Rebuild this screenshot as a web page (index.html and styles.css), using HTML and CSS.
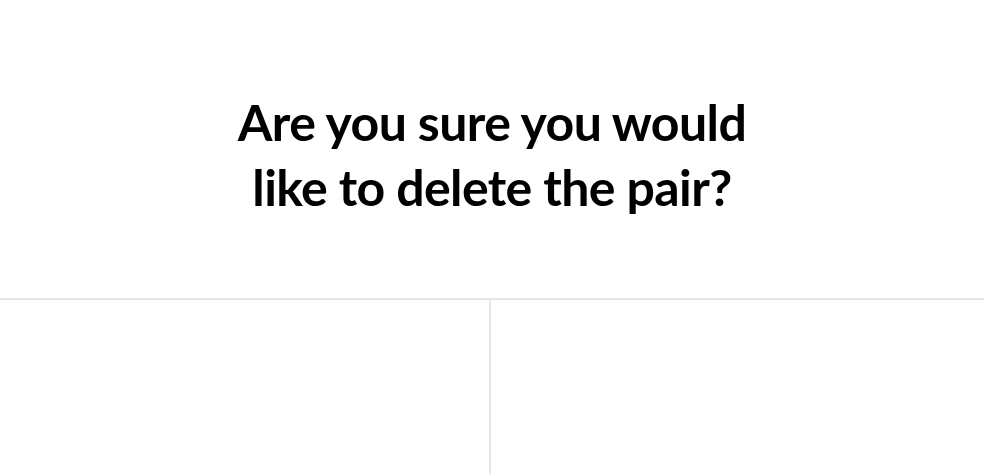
FILE: index.html
```html
<!DOCTYPE html>
<html>
<head>
<meta charset="utf-8">
<link rel="stylesheet" href="styles.css">
</head>
<body>
<div class="dialog">
  <div class="message">
    <h1 class="title">Are you sure you would<br>like to delete the pair?</h1>
  </div>
  <div class="actions">
    <button class="action action-left" type="button"></button>
    <button class="action" type="button"></button>
  </div>
</div>
</body>
</html>
```
FILE: styles.css
```css
html, body {
  margin: 0;
  padding: 0;
  background: #ffffff;
}
.dialog {
  width: 984px;
  height: 474px;
  display: flex;
  flex-direction: column;
  font-family: Lato, "Noto Sans", sans-serif;
}
.message {
  height: 298px;
  display: flex;
  align-items: center;
  justify-content: center;
  box-sizing: border-box;
  padding-top: 12px;
}
.title {
  margin: 0;
  text-align: center;
  font-size: 50px;
  font-weight: 700;
  line-height: 65px;
  color: #000000;
  letter-spacing: -0.6px;
}
.actions {
  flex: 1;
  display: flex;
  border-top: 2px solid #e6e6e6;
}
.action {
  flex: 1;
  box-sizing: border-box;
  background: #ffffff;
  border: none;
  padding: 0;
  margin: 0;
}
.action-left {
  flex: 0 0 491px;
  border-right: 2px solid #e6e6e6;
}
```
